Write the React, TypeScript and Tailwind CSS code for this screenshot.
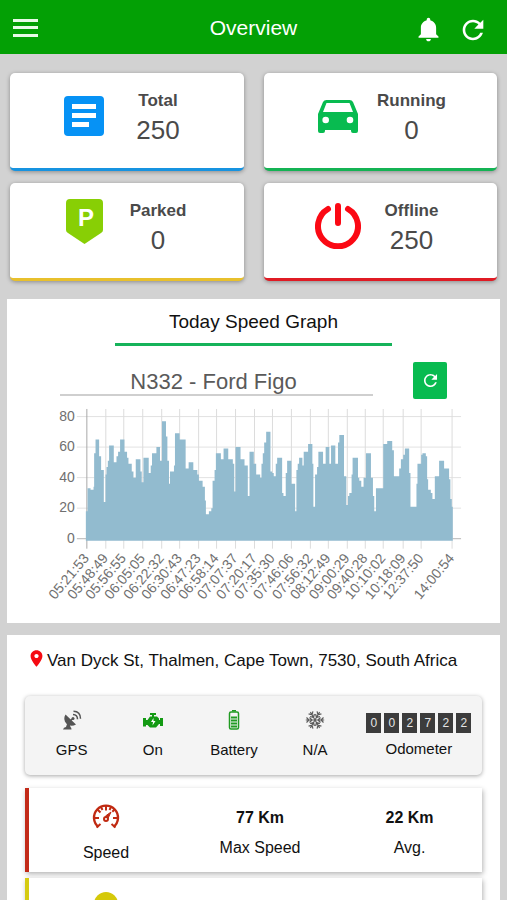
import { ReactNode } from 'react'
import { IoMdNotifications, IoMdPin, IoMdRefresh } from 'react-icons/io'

const TICKS: [number, string][] = [
  [80, '05:21:53'],
  [99, '05:48:49'],
  [117, '05:56:55'],
  [136, '06:05:05'],
  [155, '06:22:32'],
  [173, '06:30:43'],
  [192, '06:47:23'],
  [210, '06:58:14'],
  [229, '07:07:37'],
  [248, '07:20:17'],
  [266, '07:35:30'],
  [285, '07:46:06'],
  [304, '07:56:32'],
  [322, '08:12:49'],
  [341, '09:00:29'],
  [359, '09:40:28'],
  [377, '10:10:02'],
  [397, '10:18:09'],
  [415, '12:37:50'],
  [446, '14:00:54'],
]

// [sample position, speed], each speed holds until the next sample
const SAMPLES: [number, number][] = [
  [138, 18], [143, 33], [152, 32], [161, 34], [163, 56], [167, 65], [178, 54], [184, 45], [192, 24],
  [197, 42], [200, 47], [204, 51], [208, 61], [222, 50], [230, 54], [235, 57], [241, 65], [254, 57],
  [262, 53], [266, 49], [276, 44], [281, 40], [288, 52], [302, 44], [306, 37], [311, 53], [327, 43],
  [333, 48], [337, 56], [350, 60], [361, 51], [367, 77], [379, 67], [383, 51], [388, 36], [391, 44],
  [403, 48], [406, 69], [420, 65], [438, 46], [447, 50], [461, 45], [473, 42], [478, 38], [489, 34],
  [496, 25], [499, 16], [508, 18], [515, 20], [519, 38], [525, 45], [529, 56], [544, 52], [552, 59],
  [566, 52], [580, 49], [584, 31], [588, 60], [603, 52], [615, 48], [625, 28], [630, 57], [643, 49],
  [650, 42], [662, 40], [666, 49], [670, 56], [674, 63], [680, 70], [693, 44], [698, 43], [703, 41],
  [709, 49], [713, 53], [728, 30], [732, 28], [739, 43], [743, 51], [756, 36], [767, 18], [771, 45],
  [775, 49], [779, 53], [789, 48], [793, 57], [806, 62], [819, 49], [822, 21], [827, 42], [833, 47],
  [837, 57], [851, 49], [859, 60], [870, 49], [875, 61], [888, 49], [896, 63], [900, 68], [914, 41],
  [921, 22], [926, 28], [930, 30], [937, 42], [940, 53], [956, 40], [960, 38], [966, 34], [973, 40],
  [980, 56], [995, 40], [1001, 28], [1005, 18], [1010, 33], [1032, 62], [1044, 64], [1059, 58],
  [1064, 41], [1080, 46], [1085, 52], [1092, 55], [1097, 59], [1110, 43], [1114, 21], [1132, 36],
  [1135, 49], [1146, 55], [1150, 56], [1160, 54], [1164, 39], [1167, 32], [1175, 30], [1180, 26],
  [1187, 41], [1200, 51], [1215, 46], [1230, 39], [1234, 26], [1238, 21], [1241, 21],
]

const speedY = (speed: number) => 140 - speed * 1.53

function SpeedChart() {
  const area = SAMPLES.map(([x, speed]) => `H${(x / 3 + 33).toFixed(1)}V${speedY(speed).toFixed(1)}`).join('')

  return (
    <svg
      viewBox="0 0 494 224"
      className="block h-auto w-full"
      fontFamily="Liberation Sans, Arial, sans-serif"
      fontSize="14"
      fill="#707070"
      role="img"
      aria-label="Speed over the day"
    >
      {[80, 60, 40, 20, 0].map((speed) => (
        <g key={speed}>
          <line x1="70" x2="455" y1={speedY(speed)} y2={speedY(speed)} stroke={speed ? '#e2e2e2' : '#b5b5b5'} />
          <text x="68" y={speedY(speed) + 4} textAnchor="end">
            {speed}
          </text>
        </g>
      ))}
      {TICKS.map(([x, label], i) => (
        <g key={label}>
          <line x1={x} x2={x} y1="10" y2="150" stroke={i ? '#dcdcdc' : '#a8a8a8'} />
          <text transform={`translate(${x + 3} 160) rotate(-50)`} textAnchor="end">
            {label}
          </text>
        </g>
      ))}
      <path d={`M79 142${area}V142Z`} fill="#92bbcf" />
    </svg>
  )
}

function TotalIcon() {
  return (
    <svg width="40" height="40" viewBox="0 0 40 40">
      <rect width="40" height="40" rx="4" fill="#0692f5" />
      <path d="M8 8h24v5H8zM8 17h24v5H8zM8 26h17v5H8z" fill="#fff" />
    </svg>
  )
}

function CarIcon() {
  return (
    <svg width="40" height="33" viewBox="0 0 40 33">
      <path
        d="M5 2Q6 0 8.500 0h23Q34 0 35 2l5 12v17a2 2 0 0 1-2 2h-3a2 2 0 0 1-2-2v-1H7v1a2 2 0 0 1-2 2H2a2 2 0 0 1-2-2V14zM8.500 3 5 12h30l-3.500-9zM7.700 16.700a3.300 3.300 0 1 0 0 6.600 3.300 3.300 0 0 0 0-6.600zM32 16.700a3.300 3.300 0 1 0 0 6.600 3.300 3.300 0 0 0 0-6.600z"
        fill="#08bb50"
        fillRule="evenodd"
      />
    </svg>
  )
}

function ParkedIcon() {
  return (
    <svg width="37" height="54" viewBox="0 0 37 54">
      <path d="M4 0h29a4 4 0 0 1 4 4v27q0 2-2 3L18.500 45 2 34q-2-1-2-3V4a4 4 0 0 1 4-4z" fill="#88cf05" />
      <text x="20" y="27" textAnchor="middle" fontFamily="Liberation Sans, Arial, sans-serif" fontSize="24" fontWeight="700" fill="#fff">
        P
      </text>
    </svg>
  )
}

function PowerIcon() {
  return (
    <svg width="46" height="46" viewBox="0 0 46 46" fill="none" stroke="#fb0914" strokeWidth="6" strokeLinecap="round">
      <path d="M13 6a20 20 0 1 0 20 0M23 3v17" />
    </svg>
  )
}

function DishIcon() {
  return (
    <svg width="20" height="20" viewBox="0 0 20 20" fill="#555">
      <path d="M3.500 4.500 14 14.500C10.500 16.800 6.500 16 4.300 13.600 2 11 1.600 7.300 3.500 4.500zM1 19.500q.5-2.500 3-2.500l1-3 3 1.500.5 1.500q1 .5 1 2.500z" />
      <circle cx="11" cy="8.500" r="1.500" />
      <path d="m8 11 3-2.500M11 4.500q4.500.2 4.500 4.800M11.500 1.300q7 .2 7 7.500" fill="none" stroke="#555" strokeWidth="1.500" />
    </svg>
  )
}

function EngineIcon() {
  return (
    <svg width="20" height="20" viewBox="0 0 20 20">
      <path d="M7 3h6v2h-2v1.500h3l2 2V10h1V8h3v8h-3v-2h-1l-3 3.500H7L4.500 15H3v1.500H0V8h3v2h1.500L7 6.500h2V5H7z" fill="#139a13" />
      <path d="m10.500 8-2.500 4h2l-.5 3.500 3-4.500h-2z" fill="#fff" />
    </svg>
  )
}

function BatteryIcon() {
  return (
    <svg width="20" height="20" viewBox="0 0 20 20" fill="#219b22">
      <path d="M8 0h4v1.500H8z" />
      <rect x="5.500" y="2" width="9" height="17" rx="1.500" fill="none" stroke="#219b22" strokeWidth="1.500" />
      <path d="M7 6.500h6v2H7zM7 9.500h6v2H7zM7 12.500h6v2H7zM7 15.500h6v2H7z" />
    </svg>
  )
}

function SnowIcon() {
  const arms = [0, 60, 120, 180, 240, 300]
  return (
    <svg width="20" height="20" viewBox="0 0 20 20" fill="none" stroke="#5c5c5c" strokeWidth="1.200">
      {arms.map((angle) => (
        <path key={angle} d="M10 10V.8M7.500 1.500 10 4l2.500-2.500M7.500 4.500 10 7l2.500-2.500" transform={`rotate(${angle + 30} 10 10)`} />
      ))}
    </svg>
  )
}

function GaugeIcon() {
  return (
    <svg width="28" height="28" viewBox="0 0 28 28" fill="none" stroke="#c02a12">
      <path d="M6.500 25A12 12 0 1 1 21.500 25" strokeWidth="2.400" />
      <path d="M4.500 25.500 8.500 22M23.500 25.500 19.500 22M2.500 16H7M25.500 16H21M14 4v4.500M5.700 7.700 8.500 10.500M22.300 7.700l-2 2M9 5l1.500 3M19 5l-1.500 3" strokeWidth="2" />
      <circle cx="14" cy="17" r="2" strokeWidth="2" />
      <path d="m13.500 14 5.500-4-3 6.500z" fill="#c02a12" />
    </svg>
  )
}

interface StatCardProps {
  label: string
  value: number
  icon: ReactNode
  border: string
}

function StatCard({ label, value, icon, border }: StatCardProps) {
  return (
    <div className={`flex rounded-[5px] border-b-3 bg-white pt-4 pb-[21px] pl-[21%] text-[#4a4a4a] shadow-[0_1px_4px_rgba(0,0,0,0.35)] ${border}`}>
      <div className="flex h-[54px] w-[50px] items-center justify-center">{icon}</div>
      <div className="ml-2 w-[82px] text-center">
        <h2 className="text-[17px] leading-6 font-bold">{label}</h2>
        <p className="text-[26px] leading-[34px]">{value}</p>
      </div>
    </div>
  )
}

function Status({ label, icon }: { label: string; icon: ReactNode }) {
  return (
    <div className="flex w-[18%] flex-col items-center gap-[10px]">
      {icon}
      <span>{label}</span>
    </div>
  )
}

function Reading({ label, value }: { label: string; value: string }) {
  return (
    <div className="pt-[18px]">
      <p className="font-bold">{value}</p>
      <p className="mt-[6px]">{label}</p>
    </div>
  )
}

interface MetricRowProps {
  border: string
  icon: ReactNode
  label: string
  children?: ReactNode
}

function MetricRow({ border, icon, label, children }: MetricRowProps) {
  return (
    <div className={`grid grid-cols-[34%_34%_32%] border-l-4 bg-white text-center text-base leading-6 shadow-[1px_2px_5px_rgba(0,0,0,0.3)] ${border}`}>
      <div className="flex flex-col items-center pt-[14px] pb-[7px]">
        {icon}
        <span className="mt-[11px]">{label}</span>
      </div>
      {children}
    </div>
  )
}

export default function App() {
  return (
    <div className="flex h-screen flex-col bg-[#d2d2d2] font-['Liberation_Sans',Arial,sans-serif] text-[#111]">
      <header className="grid h-[54px] shrink-0 grid-cols-[1fr_auto_1fr] items-center bg-[#03a005] px-[13px] pt-[2px] text-white">
        <div>
          <button type="button" aria-label="Menu" className="block">
            <svg width="25" height="18" viewBox="0 0 25 18" fill="#e8fbe8">
              <path d="M0 0h25v3H0zM0 7h25v3H0zM0 15h25v3H0z" />
            </svg>
          </button>
        </div>
        <h1 className="text-[21px] leading-7">Overview</h1>
        <div className="flex items-center justify-end gap-[15px] pt-[3px] pr-[6px]">
          <button type="button" aria-label="Notifications">
            <IoMdNotifications size={29} />
          </button>
          <button type="button" aria-label="Refresh">
            <IoMdRefresh size={30} />
          </button>
        </div>
      </header>

      <main className="flex-1 overflow-y-auto pb-3 [scrollbar-width:none]">
        <section className="grid grid-cols-2 gap-x-5 gap-y-3 px-[10px] pt-[19px]">
          <StatCard label="Total" value={250} icon={<TotalIcon />} border="border-[#1793e0]" />
          <StatCard label="Running" value={0} icon={<CarIcon />} border="border-[#14b354]" />
          <StatCard label="Parked" value={0} icon={<ParkedIcon />} border="border-[#e8c02c]" />
          <StatCard label="Offline" value={250} icon={<PowerIcon />} border="border-[#e01b24]" />
        </section>

        <section className="mx-[7px] mt-[18px] bg-white">
          <h2 className="mx-auto w-[56%] border-b-3 border-[#16b35a] pt-[11px] pb-[9px] text-center text-[19px] leading-6">
            Today Speed Graph
          </h2>
          <div className="mt-4 flex items-start gap-10 px-[53px]">
            <select
              aria-label="Vehicle"
              className="h-[34px] min-w-0 flex-1 appearance-none border-b-2 border-[#cfcfcf] bg-transparent pt-[3px] pr-[6px] text-center text-[22px] text-[#5a5a5a] [text-align-last:center]"
            >
              <option>N332 - Ford Figo</option>
            </select>
            <button
              type="button"
              aria-label="Reload graph"
              className="flex h-[37px] w-[34px] items-center justify-center rounded-xs bg-[#08bb50] text-white"
            >
              <IoMdRefresh size={19} />
            </button>
          </div>
          <SpeedChart />
        </section>

        <section className="mx-[7px] mt-3 bg-white pb-4">
          <p className="flex items-center pt-[14px] pl-5 text-[17px] leading-6">
            <IoMdPin size={19} color="#f50a12" className="mr-px mb-1 shrink-0" />
            Van Dyck St, Thalmen, Cape Town, 7530, South Africa
          </p>

          <div className="mx-[18px] mt-[23px] flex rounded-[5px] bg-[#f4f4f4] pt-[14px] pb-[15px] pl-[6px] text-[15px] leading-5 shadow-[0_1px_4px_rgba(0,0,0,0.35)]">
            <Status label="GPS" icon={<DishIcon />} />
            <Status label="On" icon={<EngineIcon />} />
            <Status label="Battery" icon={<BatteryIcon />} />
            <Status label="N/A" icon={<SnowIcon />} />
            <div className="flex flex-1 flex-col items-center pt-[3px]">
              <div className="flex gap-[3px]">
                {'002722'.split('').map((digit, i) => (
                  <span key={i} className="w-[15px] bg-[#3c3c3c] text-center text-xs leading-5 text-[#e6e6e6]">
                    {digit}
                  </span>
                ))}
              </div>
              <span className="mt-[6px]">Odometer</span>
            </div>
          </div>

          <div className="mx-[18px] mt-[13px] flex flex-col gap-[6px]">
            <MetricRow label="Speed" icon={<GaugeIcon />} border="border-[#c22a18]">
              <Reading value="77 Km" label="Max Speed" />
              <Reading value="22 Km" label="Avg." />
            </MetricRow>
            <MetricRow
              label=""
              icon={
                <svg width="24" height="28" viewBox="0 0 24 28">
                  <circle cx="12" cy="12" r="12" fill="#d5c90a" />
                </svg>
              }
              border="border-[#d5cb12]"
            />
          </div>
        </section>
      </main>
    </div>
  )
}
